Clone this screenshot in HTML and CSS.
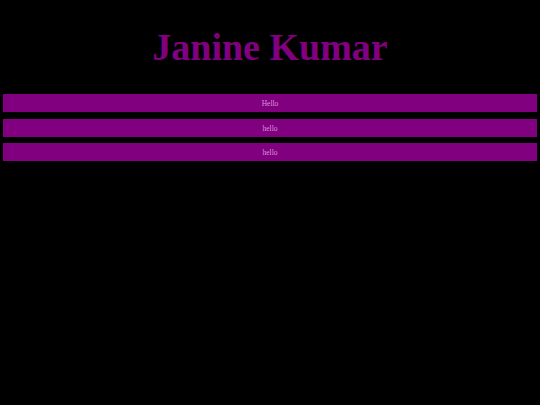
FILE: index.html
```html
<!DOCTYPE html>
<html>
<head>
<meta charset="utf-8">
<link rel="stylesheet" href="styles.css">
</head>
<body class="page">
<h1 class="title">Janine Kumar</h1>
<div class="list">
  <div class="item">Hello</div>
  <div class="item">hello</div>
  <div class="item">hello</div>
</div>
</body>
</html>
```
FILE: styles.css
```css
html, body {
  margin: 0;
  padding: 0;
  background: #000;
}
.page {
  width: 540px;
  height: 405px;
  font-family: "Liberation Serif", "Times New Roman", serif;
}
.title {
  margin: 0;
  padding-top: 24px;
  text-align: center;
  color: #800080;
  font-size: 38px;
  font-weight: bold;
  line-height: 46px;
}
.list {
  display: flex;
  flex-direction: column;
  gap: 6.5px;
  padding: 24px 3px 0 3px;
}
.item {
  height: 18px;
  background: #800080;
  color: #dc96dc;
  font-size: 7.5px;
  line-height: 19px;
  text-align: center;
}
```
